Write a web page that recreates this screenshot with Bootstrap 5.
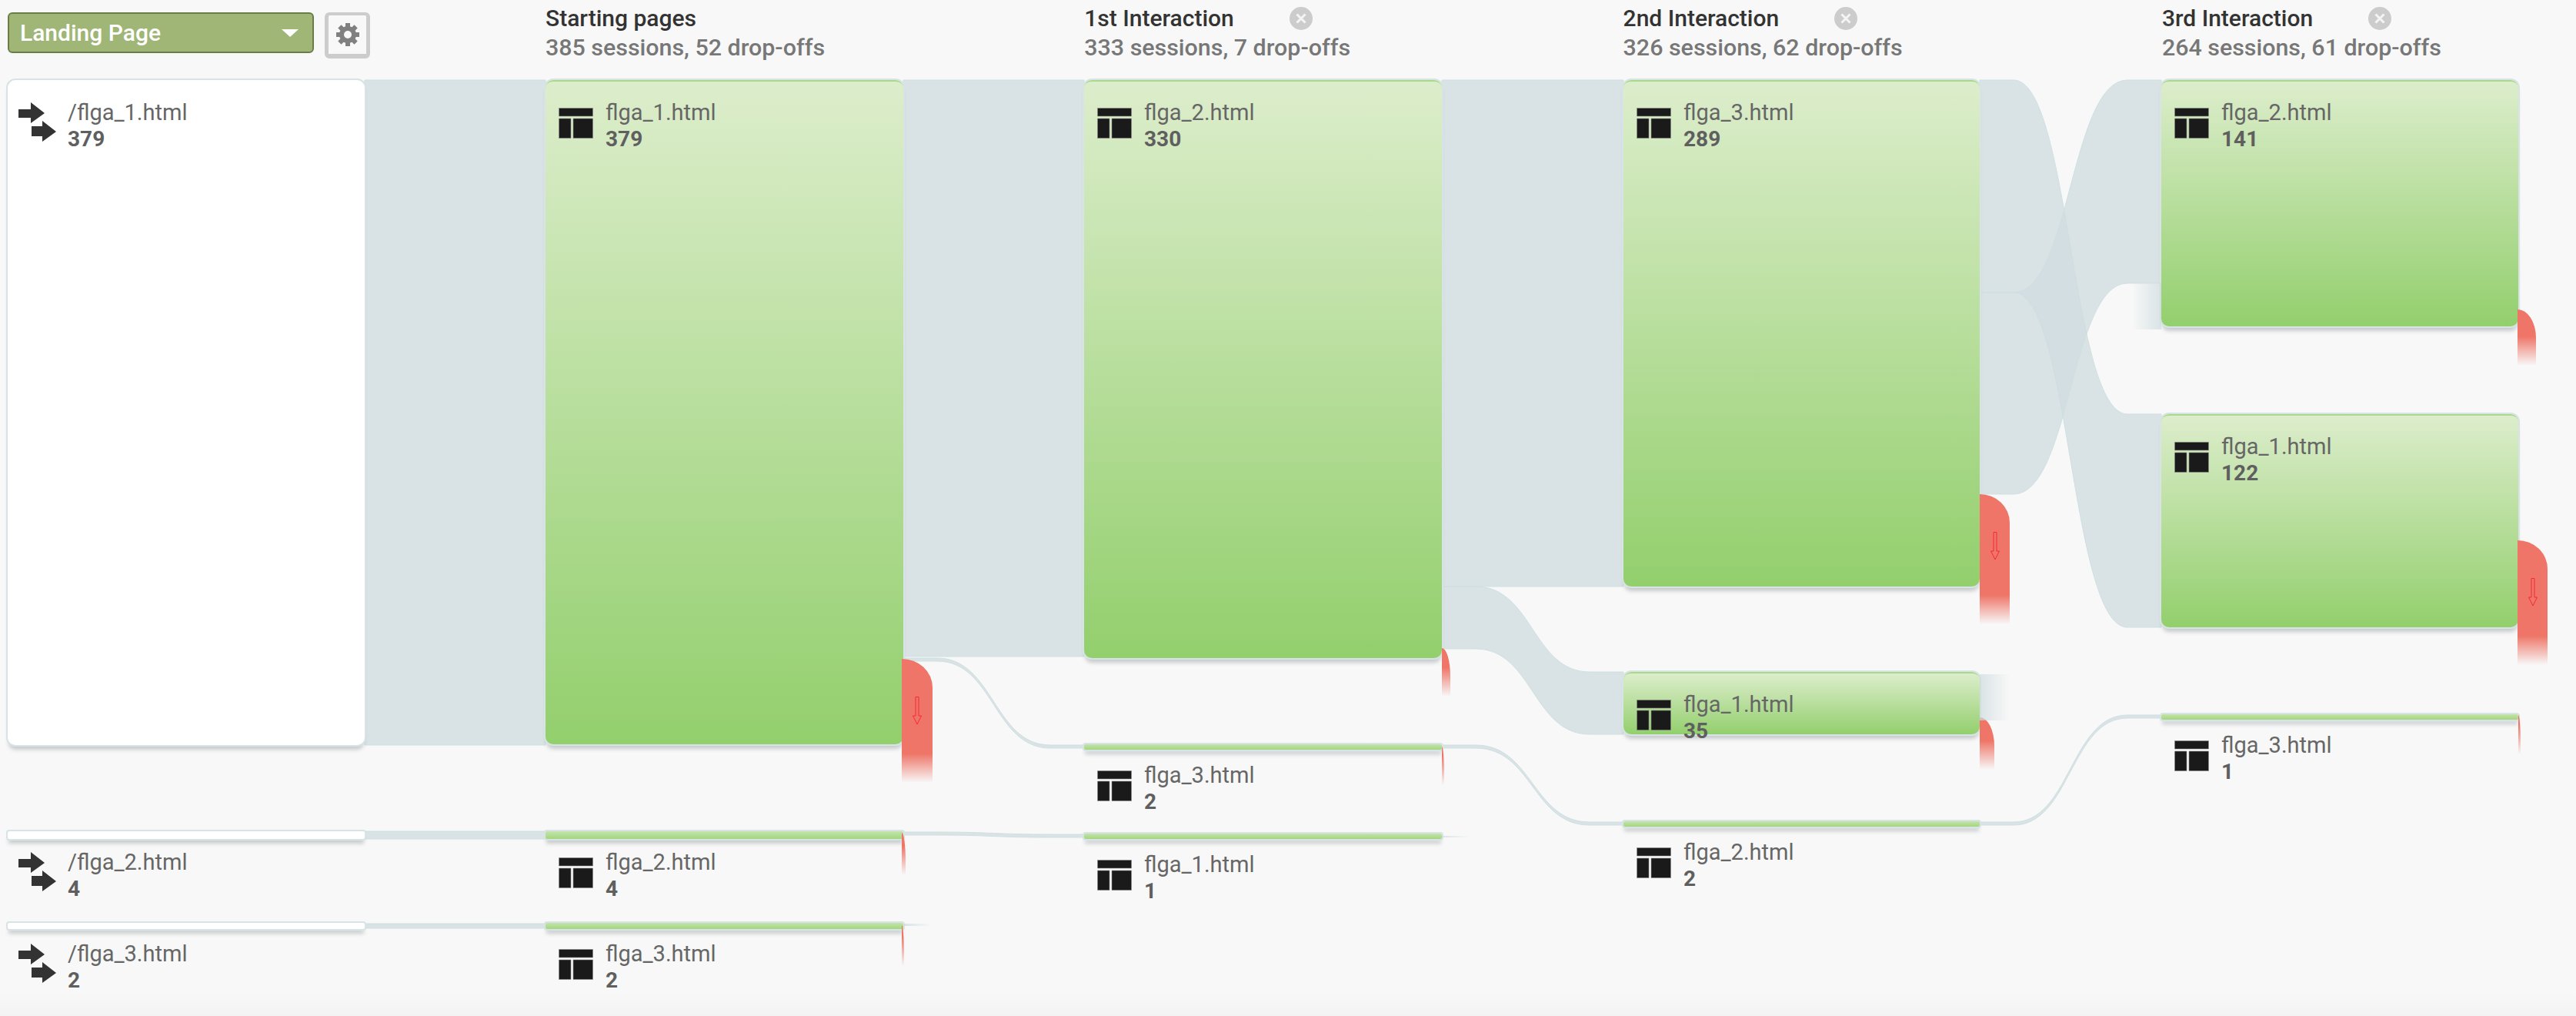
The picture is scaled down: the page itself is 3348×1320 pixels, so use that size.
<!DOCTYPE html>
<html lang="en">
<head>
  <meta charset="UTF-8" />
  <meta name="viewport" content="width=device-width, initial-scale=1" />
  <title>Behavior Flow</title>
  <link href="https://cdn.jsdelivr.net/npm/bootstrap@5.3.3/dist/css/bootstrap.min.css" rel="stylesheet" />
  <style>
    body {
      background: linear-gradient(#f8f8f8 1290px, #f3f3f3 1320px);
      font-family: Roboto, "Liberation Sans", sans-serif;
      width: 3348px;
      height: 1320px;
      overflow: hidden;
    }
    .flow-head {
      height: 96px;
    }
    .head-first {
      width: 709px;
      flex: none;
      padding: 16px 0 0 10px;
    }
    .head-col {
      width: 700.3px;
      flex: none;
      padding-top: 5px;
    }
    .seg-btn {
      width: 398px;
      height: 53px;
      background: #9fb677;
      border: 2px solid #6a7d47;
      border-radius: 6px;
      color: #fff;
      font-size: 30px;
      font-weight: 500;
      padding: 0 18px 0 14px;
    }
    .seg-btn:hover {
      background: #9fb677;
      border-color: #6a7d47;
      color: #fff;
    }
    .seg-btn::after {
      margin-left: auto;
      border-top: 10px solid #fff;
      border-left: 11px solid transparent;
      border-right: 11px solid transparent;
      border-bottom: 0;
    }
    .gear-btn {
      width: 59px;
      height: 60px;
      background: #f8f8f8;
      border: solid #ccc;
      border-width: 4px 5px 6px;
      border-radius: 6px;
      margin-left: 14px;
    }
    .head-title {
      font-size: 30px;
      font-weight: 500;
      color: #333;
      line-height: 38px;
    }
    .head-sub {
      font-size: 30.4px;
      font-weight: 500;
      color: #777;
      line-height: 38px;
    }
    .head-close {
      margin-left: 72px;
    }
    .flow-canvas {
      height: 1224px;
    }
    .flow-svg {
      left: 0;
      top: 0;
    }
    .flow-node {
      background: linear-gradient(#dcedcb, #93cf6d);
      border-top: 2px solid #a9da8b;
      border-radius: 10px;
      box-shadow: 0 0 0 2px #d7e3e4, 0 7px 5px -1px rgba(60, 70, 80, .25);
      color: #666;
    }
    .flow-node.is-entry {
      background: #fff;
      border-top-color: #fff;
    }
    .flow-node.is-thin {
      border-radius: 2px;
      border-top: 0;
      background: linear-gradient(#c3e3ab, #a3d67f);
    }
    .flow-node.is-thin.is-entry {
      background: #fff;
    }
    .node-label {
      top: 24px;
      left: 17px;
    }
    .node-icon {
      width: 45px;
      margin-top: 10px;
      flex: none;
    }
    .node-icon-in {
      width: 50px;
      flex: none;
      margin: 3px -2px 0 -3px;
    }
    .node-text {
      margin-left: 16px;
      line-height: 33px;
      font-size: 29px;
      white-space: nowrap;
    }
    .node-text b {
      font-weight: 700;
      font-size: 28px;
      margin-top: 1px;
      color: #5f5f5f;
      display: block;
    }
    .drop-off {
      border-top-right-radius: 100% 37px;
    }
    .drop-arrow {
      top: 49px;
      left: 50%;
      transform: translateX(-50%);
    }
    .grey-fade {
      background: linear-gradient(to right, rgba(207, 220, 223, .75), rgba(207, 220, 223, 0));
    }
    .grey-fade.to-left {
      background: linear-gradient(to left, rgba(207, 220, 223, .75), rgba(207, 220, 223, 0));
    }
  </style>
</head>
<body>
  <div class="d-flex flow-head">
    <div class="head-first d-flex align-items-start">
      <button class="btn seg-btn d-flex align-items-center dropdown-toggle" type="button">Landing Page</button>
      <button class="btn gear-btn p-0 d-flex align-items-center justify-content-center" type="button" aria-label="Settings">
        <svg width="32" height="32" viewBox="0 0 32 32">
          <circle cx="16" cy="16" r="8" fill="none" stroke="#808080" stroke-width="6"/>
          <g stroke="#808080" stroke-width="6">
            <path d="M16 1V7M16 25V31M5.4 5.4L9.6 9.6M22.4 22.4L26.6 26.6M1 16H7M25 16H31M5.4 26.6L9.6 22.4M22.4 9.6L26.6 5.4"/>
          </g>
        </svg>
      </button>
    </div>
    <div class="head-col" id="head1"></div>
    <div class="head-col" id="head2"></div>
    <div class="head-col" id="head3"></div>
    <div class="head-col" id="head4"></div>
  </div>
  <div class="position-relative flow-canvas" id="canvas"></div>

  <script>
    // all coordinates below are page pixels, canvas starts under the header row
    const TOP = 96;

    const heads = [
      { id: "head1", title: "Starting pages", sub: "385 sessions, 52 drop-offs", close: false },
      { id: "head2", title: "1st Interaction", sub: "333 sessions, 7 drop-offs", close: true },
      { id: "head3", title: "2nd Interaction", sub: "326 sessions, 62 drop-offs", close: true },
      { id: "head4", title: "3rd Interaction", sub: "264 sessions, 61 drop-offs", close: true }
    ];

    // x, width, top, bottom, page name, sessions
    const nodes = [
      [10, 464, 104, 968, "/flga_1.html", 379],
      [10, 464, 1080, 1090, "/flga_2.html", 4],
      [10, 464, 1199, 1207, "/flga_3.html", 2],
      [709, 465, 104, 967, "flga_1.html", 379],
      [709, 465, 1080, 1090, "flga_2.html", 4],
      [709, 465, 1199, 1207, "flga_3.html", 2],
      [1409, 465, 104, 855, "flga_2.html", 330],
      [1409, 465, 967, 974, "flga_3.html", 2],
      [1409, 465, 1083, 1090, "flga_1.html", 1],
      [2110, 463, 104, 762, "flga_3.html", 289],
      [2110, 463, 873, 954, "flga_1.html", 35],
      [2110, 463, 1067, 1074, "flga_2.html", 2],
      [2809, 464, 104, 424, "flga_2.html", 141],
      [2809, 464, 538, 815, "flga_1.html", 122],
      [2809, 464, 928, 935, "flga_3.html", 1]
    ];

    // x0, x1, source top, source bottom, target top, target bottom
    const flows = [
      [474, 709, 104, 968, 104, 968],
      [474, 709, 1080, 1090, 1080, 1090],
      [474, 709, 1200, 1206, 1200, 1206],
      [1174, 1409, 104, 853, 104, 853],
      [1174, 1409, 855, 859, 968, 972],
      [1174, 1409, 1081, 1085, 1084, 1088],
      [1874, 2110, 104, 762, 104, 762],
      [1874, 2110, 762, 843, 873, 954],
      [1874, 2110, 968, 972, 1068, 1072],
      [2573, 2809, 104, 380, 538, 815],
      [2573, 2809, 380, 642, 104, 368],
      [2573, 2809, 1068, 1072, 929, 933]
    ];

    // x, width, top, bottom, has arrow
    const drops = [
      [1172, 40, 856, 1017, true],
      [1172, 5, 1082, 1137, false],
      [1172, 3, 1202, 1255, false],
      [1874, 11, 842, 905, false],
      [1874, 3, 970, 1020, false],
      [2573, 39, 642, 811, true],
      [2573, 19, 932, 1000, false],
      [3272, 24, 402, 475, false],
      [3272, 39, 702, 864, true],
      [3273, 3, 929, 980, false]
    ];

    // x, width, top, bottom, direction
    const fades = [
      [2573, 39, 876, 936, ""],
      [2770, 39, 368, 428, "to-left"],
      [1874, 36, 1086, 1088, ""],
      [1175, 36, 1200, 1203, ""]
    ];

    const closeIcon = '<svg class="head-close" width="30" height="30" viewBox="0 0 30 30"><circle cx="15" cy="15" r="15" fill="#ccc"/><path d="M9.5 9.5L20.5 20.5M20.5 9.5L9.5 20.5" stroke="#f4f4f4" stroke-width="3"/></svg>';
    const arrowsIcon = '<svg class="node-icon-in" height="52" viewBox="0 0 50 52"><path fill="#333" d="M0 9H16V0L34 14L16 27V20H0Z"/><path fill="#333" d="M17 31H31V24L49 38L31 51V44H17Z"/></svg>';
    const pageIcon = '<svg class="node-icon" height="40" viewBox="0 0 45 40"><path fill="#1a1a1a" stroke="#888" stroke-width=".6" d="M.5.5H44.5V11H.5ZM.5 14H16V39.5H.5ZM19 14H44.5V39.5H19Z"/></svg>';

    const canvas = document.getElementById("canvas");

    function renderHeads() {
      heads.forEach(h => {
        document.getElementById(h.id).innerHTML =
          '<div class="d-flex align-items-center head-title">' + h.title + (h.close ? closeIcon : "") + '</div>' +
          '<div class="head-sub">' + h.sub + '</div>';
      });
    }

    function bandPath(f) {
      const [x0, x1, a0, b0, a1, b1] = f;
      if (a0 === a1 && b0 === b1) {
        return `M${x0} ${a0 - TOP}H${x1}V${b1 - TOP}H${x0}Z`;
      }
      const flat = 44;
      const xa = x0 + flat;
      const xb = x1 - flat;
      const xm = (xa + xb) / 2;
      return `M${x0} ${a0 - TOP}H${xa}C${xm} ${a0 - TOP} ${xm} ${a1 - TOP} ${xb} ${a1 - TOP}H${x1}` +
        `V${b1 - TOP}H${xb}C${xm} ${b1 - TOP} ${xm} ${b0 - TOP} ${xa} ${b0 - TOP}H${x0}Z`;
    }

    function renderFlows() {
      const paths = flows.map(f =>
        `<path d="${bandPath(f)}" fill="#cfdcdf" fill-opacity=".75" stroke="#cfe0e0" stroke-width="1"/>`
      ).join("");
      canvas.insertAdjacentHTML("beforeend",
        `<svg class="position-absolute flow-svg" width="3348" height="1224">${paths}</svg>`);
    }

    function place(el, x, w, top, bottom) {
      el.style.left = x + "px";
      el.style.width = w + "px";
      el.style.top = (top - TOP) + "px";
      el.style.height = (bottom - top) + "px";
      canvas.appendChild(el);
    }

    function renderNodes() {
      nodes.forEach(n => {
        const [x, w, top, bottom, name, count] = n;
        const el = document.createElement("div");
        el.className = "flow-node position-absolute";
        if (x === 10) el.classList.add("is-entry");
        if (bottom - top < 20) el.classList.add("is-thin");
        el.innerHTML = '<div class="node-label position-absolute d-flex align-items-start">' +
          (x === 10 ? arrowsIcon : pageIcon) +
          `<div class="node-text">${name}<b>${count}</b></div></div>`;
        place(el, x, w, top, bottom);
      });
    }

    function renderDrops() {
      drops.forEach(d => {
        const [x, w, top, bottom, arrow] = d;
        const el = document.createElement("div");
        el.className = "drop-off position-absolute";
        el.style.background = `linear-gradient(#ee7567 calc(100% - 38px), rgba(238, 117, 103, 0))`;
        if (arrow) {
          el.innerHTML = '<svg class="position-absolute drop-arrow" width="13" height="37" viewBox="0 0 13 37"><path d="M4.5 .5H8.5V25H12L6.5 36L1 25H4.5Z" fill="none" stroke="#f5283c" stroke-width="1"/></svg>';
        }
        place(el, x, w, top, bottom);
      });
      fades.forEach(f => {
        const [x, w, top, bottom, dir] = f;
        const el = document.createElement("div");
        el.className = "grey-fade position-absolute " + dir;
        place(el, x, w, top, bottom);
      });
    }

    renderHeads();
    renderFlows();
    renderNodes();
    renderDrops();
  </script>
  <script src="https://cdn.jsdelivr.net/npm/bootstrap@5.3.3/dist/js/bootstrap.bundle.min.js"></script>
</body>
</html>
